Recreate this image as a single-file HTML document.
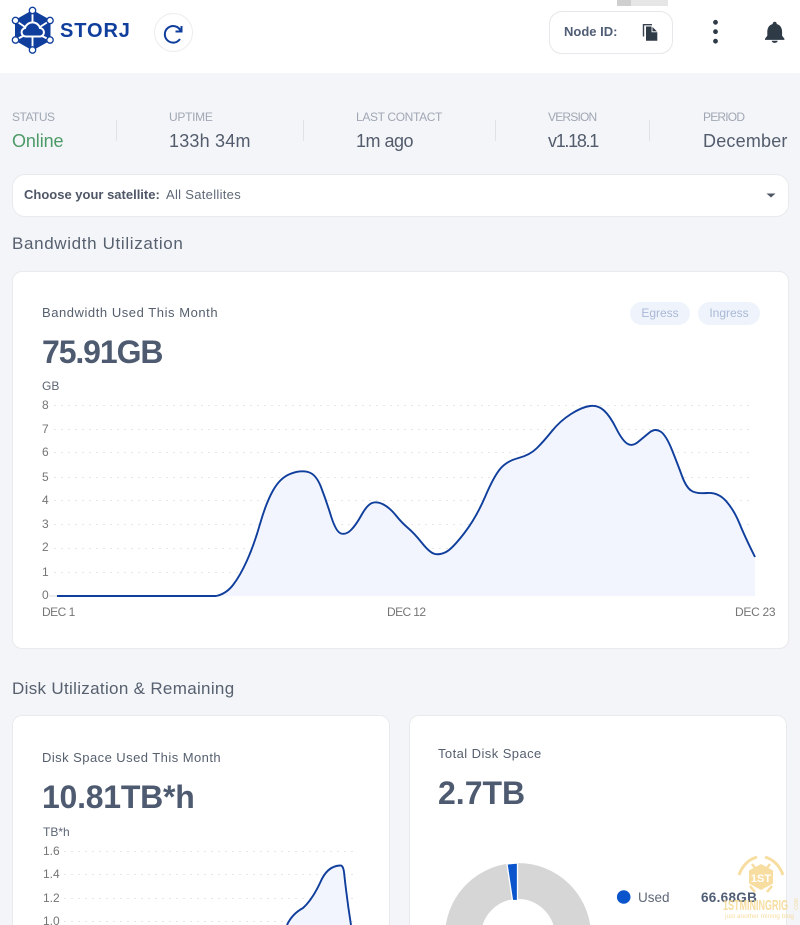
<!DOCTYPE html>
<html lang="en">
<head>
<meta charset="utf-8">
<title>Storj Node Dashboard</title>
<style>
html,body{margin:0;padding:0;width:800px;height:925px;overflow:hidden;background:#f4f5f8}
body{position:relative;font-family:"Liberation Sans",sans-serif;color:#4a5568}
#w{position:absolute;left:0;top:0;width:800px;height:925px;overflow:hidden}
.a{position:absolute;white-space:nowrap;line-height:20px;margin-top:-10px}
.box{position:absolute;background:#fff;box-sizing:border-box}
.lab{font-size:12px;color:#a0a7b4}
.val{font-size:18px;color:#525c6d;letter-spacing:.2px}
.div{position:absolute;width:1px;height:21px;top:120px;background:#dfe2e7}
.h{font-size:17px;color:#56606f}
.ct{font-size:13px;color:#56606f}
.big{font-size:32px;font-weight:bold;color:#4d5a70}
.card{background:#fff;border:1px solid #e8eaee;border-radius:10px}
.pill{position:absolute;top:302px;height:23px;border-radius:12px;background:#eff4fc;color:#a9b8d6;font-size:12px;line-height:23px;text-align:center}
.tick{font-size:12px;color:#757575}
svg{position:absolute;left:0;top:0}
</style>
</head>
<body>
<div id="w">
<div class="box" style="left:0;top:0;width:800px;height:73px"></div>
<div style="position:absolute;left:617px;top:0;width:51px;height:6px;background:#e6e6e6"></div>
<div style="position:absolute;left:617px;top:0;width:14px;height:6px;background:#cfcfcf"></div>

<div class="box" style="left:154px;top:13px;width:39px;height:39px;border:1px solid #ececef;border-radius:50%"></div>
<div class="box" style="left:549px;top:11px;width:124px;height:43px;border:1px solid #e6e7ea;border-radius:13px"></div>
<div class="a" style="left:60px;top:31px;font-size:20px;font-weight:bold;color:#0f3e9c;letter-spacing:.9px">STORJ</div>
<div class="a" style="left:564px;top:32px;font-size:13px;font-weight:bold;color:#4f5d75">Node ID:</div>

<div class="a lab" style="left:12px;top:117px;letter-spacing:-.5px">STATUS</div>
<div class="a val" style="left:12px;top:141px;color:#4c9a68;letter-spacing:-.1px">Online</div>
<div class="div" style="left:116px"></div>
<div class="a lab" style="left:169px;top:117px;letter-spacing:-.3px">UPTIME</div>
<div class="a val" style="left:169px;top:141px">133h 34m</div>
<div class="div" style="left:303px"></div>
<div class="a lab" style="left:356px;top:117px;letter-spacing:-.35px">LAST CONTACT</div>
<div class="a val" style="left:356px;top:141px;letter-spacing:-.5px">1m ago</div>
<div class="div" style="left:495px"></div>
<div class="a lab" style="left:548px;top:117px;letter-spacing:-.8px">VERSION</div>
<div class="a val" style="left:548px;top:141px;letter-spacing:-1.3px">v1.18.1</div>
<div class="div" style="left:649px"></div>
<div class="a lab" style="left:703px;top:117px;letter-spacing:-.8px">PERIOD</div>
<div class="a val" style="left:703px;top:141px">December</div>

<div class="box" style="left:12px;top:174px;width:777px;height:43px;border:1px solid #e8eaee;border-radius:13px"></div>
<div class="a" style="left:24px;top:195px;font-size:13px;font-weight:bold;color:#4f5767">Choose your satellite:</div>
<div class="a" style="left:166px;top:195px;font-size:13px;color:#5f6878;letter-spacing:.3px">All Satellites</div>

<div class="a h" style="left:12px;top:244px;letter-spacing:.65px">Bandwidth Utilization</div>
<div class="box card" style="left:12px;top:271px;width:777px;height:378px"></div>
<div class="a ct" style="left:42px;top:313px;letter-spacing:.55px">Bandwidth Used This Month</div>
<div class="a big" style="left:42px;top:352px;letter-spacing:-1.1px">75.91GB</div>
<div class="pill" style="left:630px;width:60px">Egress</div>
<div class="pill" style="left:698px;width:62px">Ingress</div>
<div class="a" style="left:42px;top:386px;font-size:12px;color:#5b6575">GB</div>

<div class="a tick" style="left:42px;top:405px">8</div>
<div class="a tick" style="left:42px;top:429px">7</div>
<div class="a tick" style="left:42px;top:452px">6</div>
<div class="a tick" style="left:42px;top:477px">5</div>
<div class="a tick" style="left:42px;top:500px">4</div>
<div class="a tick" style="left:42px;top:524px">3</div>
<div class="a tick" style="left:42px;top:547px">2</div>
<div class="a tick" style="left:42px;top:572px">1</div>
<div class="a tick" style="left:42px;top:595px">0</div>
<div class="a tick" style="left:42px;top:612px;letter-spacing:-.5px">DEC 1</div>
<div class="a tick" style="left:387px;top:612px;letter-spacing:-.6px">DEC 12</div>
<div class="a tick" style="left:735px;top:612px;letter-spacing:-.3px">DEC 23</div>

<div class="a h" style="left:12px;top:689px;letter-spacing:.32px">Disk Utilization &amp; Remaining</div>
<div class="box card" style="left:12px;top:715px;width:378px;height:210px;border-bottom:0;border-radius:10px 10px 0 0"></div>
<div class="box card" style="left:409px;top:715px;width:378px;height:210px;border-bottom:0;border-radius:10px 10px 0 0"></div>
<div class="a ct" style="left:42px;top:758px;letter-spacing:.45px">Disk Space Used This Month</div>
<div class="a big" style="left:42px;top:797px;letter-spacing:-.25px">10.81TB*h</div>
<div class="a" style="left:43px;top:832px;font-size:12px;color:#5b6575">TB*h</div>
<div class="a tick" style="left:43px;top:851px">1.6</div>
<div class="a tick" style="left:43px;top:874px">1.4</div>
<div class="a tick" style="left:43px;top:898px">1.2</div>
<div class="a tick" style="left:43px;top:921px">1.0</div>
<div class="a ct" style="left:438px;top:754px;letter-spacing:.43px">Total Disk Space</div>
<div class="a big" style="left:438px;top:793px">2.7TB</div>
<div class="a" style="left:638px;top:898px;font-size:13.5px;color:#5f6878">Used</div>
<div class="a" style="left:701px;top:898px;font-size:13.5px;font-weight:bold;color:#4f5d75;letter-spacing:.3px">66.68GB</div>

<svg width="800" height="925" viewBox="0 0 800 925">
  <!-- logo -->
  <polygon points="32.5,10 50.500,20 50.500,40.500 32.500,50.500 15,40.500 15,20" fill="#0f3e9c"/>
  <g stroke="#fff" stroke-width="1.900" fill="none">
    <path d="M32.500,11L19,19M32.500,11L46,19M32.500,50L19,42M32.500,50L46,42" stroke-width="0"/>
    <path d="M32.500,11V24M15.500,20.500L25,27M50,20.500L40,27M15.500,40L24,35.500M50,40L41,35.500M32.500,50V37"/>
    <path d="M25.500,36.500a4.300,4.300 0 0 1 -.5,-8.500a7.800,7.800 0 0 1 15,0a4.300,4.300 0 0 1 .5,8.500Z" fill="#0f3e9c" stroke-width="2"/>
  </g>
  <g fill="#fff" stroke="#0f3e9c" stroke-width="1.300">
    <circle cx="32.500" cy="10.500" r="3.200"/><circle cx="32.500" cy="50" r="3.200"/>
    <circle cx="15.500" cy="20.500" r="3.200"/><circle cx="50" cy="20.500" r="3.200"/>
    <circle cx="15.500" cy="40" r="3.200"/><circle cx="50" cy="40" r="3.200"/>
  </g>
  <!-- refresh -->
  <path d="M180,39A8.300,8.300 0 1 1 180.500,30.500" fill="none" stroke="#0f3e9c" stroke-width="2"/>
  <path d="M181.500,26V31.500H175.500" fill="none" stroke="#0f3e9c" stroke-width="2"/>
  <!-- copy -->
  <path d="M643.500,36.500V24.700H652" fill="none" stroke="#3b4350" stroke-width="1.400"/>
  <path d="M646,26.500H652L657.300,31.800V40.700H646Z" fill="#2f3a47"/>
  <path d="M652,26.500V31.800H657.300" fill="none" stroke="#fff" stroke-width=".9"/>
  <!-- dots -->
  <g fill="#2f3a47"><circle cx="715.500" cy="22.300" r="2.400"/><circle cx="715.500" cy="31.700" r="2.400"/><circle cx="715.500" cy="41.200" r="2.400"/></g>
  <!-- bell -->
  <path d="M774.700,21.700a2,2 0 0 1 2,2.300c3.700,1 5.400,4 5.400,8v3.800l2.300,3v1.100h-19.400v-1.100l2.300,-3V32c0,-4 1.700,-7 5.400,-8a2,2 0 0 1 2,-2.300Z" fill="#2f3a47"/>
  <path d="M771.700,40.700h6a3,2.200 0 0 1 -6,0Z" fill="#2f3a47"/>
  <!-- dropdown -->
  <polygon points="766.500,193.500 775.500,193.500 771,197.500" fill="#4f5767"/>

  <!-- chart 1 grid -->
  <g stroke="#e6e6e6" stroke-width="1" stroke-dasharray="2 5">
    <path d="M54,405.500H752M54,429.500H752M54,452.500H752M54,477.500H752M54,500.500H752M54,524.500H752M54,548.500H752M54,572.500H752"/>
  </g>
  <path d="M49,596H57" stroke="#d8d8d8"/>
  <path fill="#f2f5fd" d="M216,596Q226,594 233,585Q240,576 247,560.500Q254,545 260,524Q266,503 273,490.500Q280,478 290,474Q300,470 308,472Q316,474 321,487Q326,500 331,516Q336,532 341,533.500Q346,535 351,530Q356,525 361.500,515Q367,505 372,503Q377,501 383.500,504.500Q390,508 396,515.500Q402,523 408,528Q414,533 422,543Q430,553 435,554Q440,555 446,552Q452,549 464,533.500Q476,518 485,497Q494,476 500.500,468.500Q507,461 518.500,458Q530,455 537,448Q544,441 552,431Q560,421 571,414Q582,407 590,406Q598,405 604,410.500Q610,416 616,428Q622,440 627,443.500Q632,447 638,442Q644,437 649.500,432.500Q655,428 660.500,431.500Q666,435 672,450Q678,465 682,476Q686,487 691,490.500Q696,494 707,493Q718,492 726,501Q734,510 739.500,523.500Q745,537 755,557V596Z"/>
  <path fill="none" stroke="#0f3e9c" stroke-width="1.900" d="M57,596H216Q226,594 233,585Q240,576 247,560.500Q254,545 260,524Q266,503 273,490.500Q280,478 290,474Q300,470 308,472Q316,474 321,487Q326,500 331,516Q336,532 341,533.500Q346,535 351,530Q356,525 361.500,515Q367,505 372,503Q377,501 383.500,504.500Q390,508 396,515.500Q402,523 408,528Q414,533 422,543Q430,553 435,554Q440,555 446,552Q452,549 464,533.500Q476,518 485,497Q494,476 500.500,468.500Q507,461 518.500,458Q530,455 537,448Q544,441 552,431Q560,421 571,414Q582,407 590,406Q598,405 604,410.500Q610,416 616,428Q622,440 627,443.500Q632,447 638,442Q644,437 649.500,432.500Q655,428 660.500,431.500Q666,435 672,450Q678,465 682,476Q686,487 691,490.500Q696,494 707,493Q718,492 726,501Q734,510 739.500,523.500Q745,537 755,557"/>

  <!-- chart 2 -->
  <g stroke="#e6e6e6" stroke-width="1" stroke-dasharray="2 5">
    <path d="M64,851.500H353M64,874.500H353M64,898.500H353M64,921.500H353"/>
  </g>
  <path fill="#f2f5fd" d="M287,925Q292,914 303,908Q312,900 320,883Q327,866 340,865.500Q343,865 344,872Q347,900 351,925Z"/>
  <path fill="none" stroke="#0f3e9c" stroke-width="1.900" d="M287,925Q292,914 303,908Q312,900 320,883Q327,866 340,865.500Q343,865 344,872Q347,900 351,925"/>

  <!-- donut -->
  <circle cx="518" cy="936" r="55" fill="none" stroke="#d6d6d6" stroke-width="36"/>
  <path d="M517.500,863L507,864L512.500,900.500L517.500,900.500Z" fill="#0a55cc" stroke="#fff" stroke-width="1.300"/>
  <circle cx="623.700" cy="897" r="6.800" fill="#0a55cc"/>

  <!-- watermark -->
  <g opacity=".8">
    <path d="M739,875Q744,861 757,857M783,875Q778,861 765,857" fill="none" stroke="#f7d58a" stroke-width="3"/>
    <path d="M752,864L762,877M770,864L760,877M750,886L755,892M772,886L767,892" stroke="#f7d58a" stroke-width="2.500"/>
    <polygon points="761,864 773,870.500 773,883.500 761,890 749,883.500 749,870.500" fill="#f7d58a"/>
    <text x="761" y="882" font-family="Liberation Sans" font-weight="bold" font-size="11" fill="#fff" text-anchor="middle">1ST</text>
    <text transform="translate(723,910) scale(.6,1)" font-family="Liberation Sans" font-weight="bold" font-size="15" fill="#f5d58a">1STMININGRIG</text>
    <text transform="translate(798,910) rotate(-90)" font-family="Liberation Sans" font-size="5" fill="#f5d58a">COM</text>
    <text x="725" y="918" font-family="Liberation Sans" font-size="6.500" fill="#f5d58a">just another mining blog</text>
  </g>
</svg>
</div>
</body>
</html>
